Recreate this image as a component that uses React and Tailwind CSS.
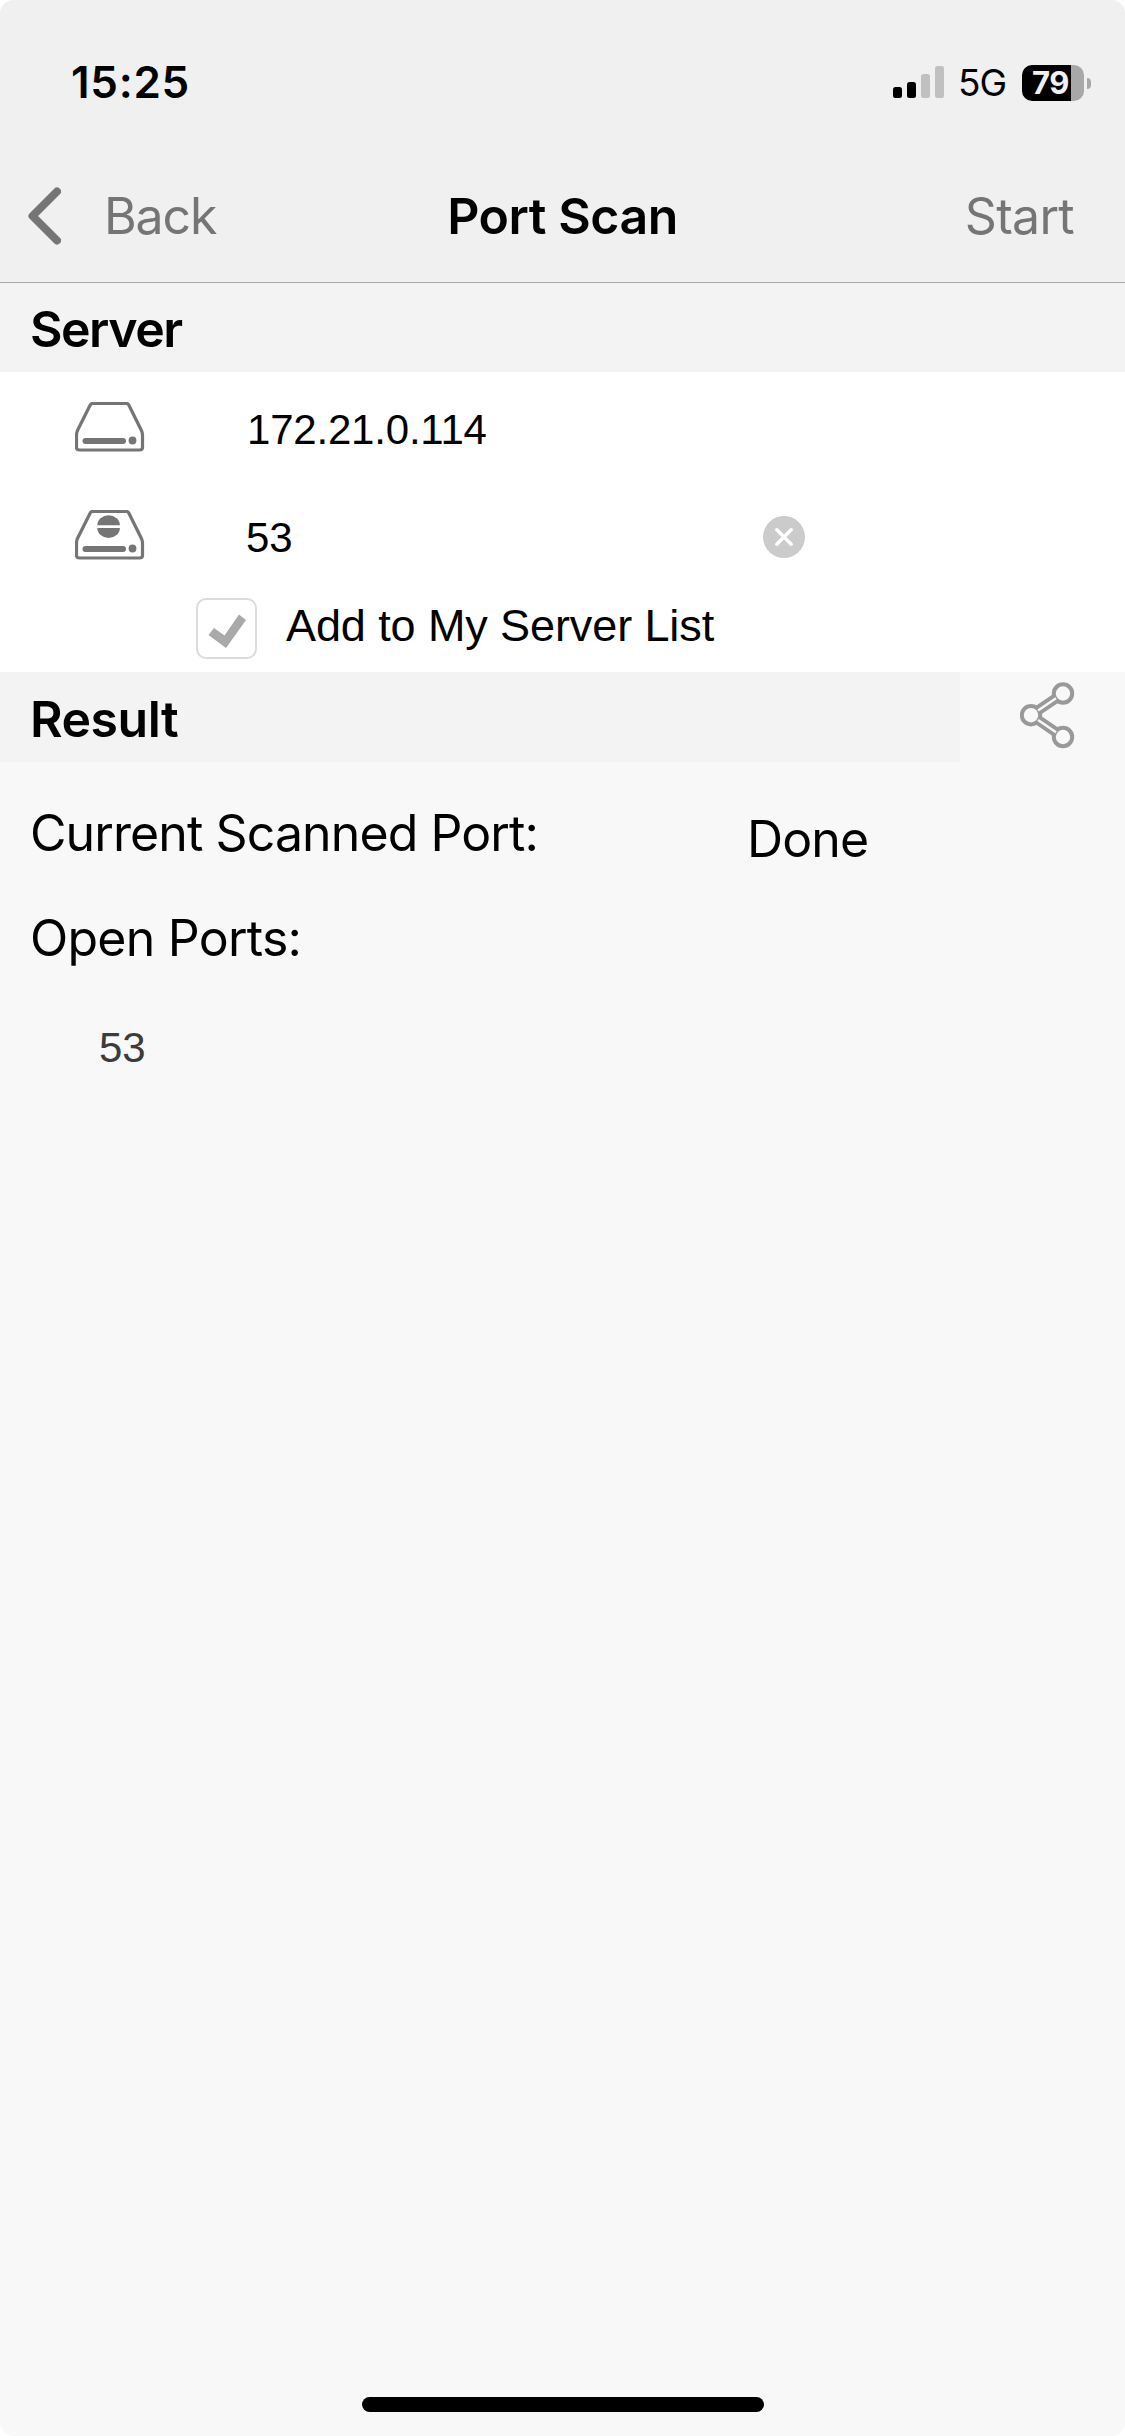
function Drive({ withDisc }) {
  return (
    <svg className="block" width="70" height="50" viewBox="0 0 70 50" fill="none">
      <path d="M17.500 1.500H51.500Q53 1.500 53.800 3L66.200 28Q67.500 30.500 67.500 33V45.500Q67.500 48 64.500 48H4.500Q1.500 48 1.500 45.500V33Q1.500 30.500 2.700 28L15.200 3Q16 1.500 17.500 1.500Z" stroke="#757575" strokeWidth="3.200" />
      <rect x="7.500" y="36" width="43.500" height="6" rx="3" fill="#757575" />
      <circle cx="57.500" cy="38.500" r="3.900" fill="#757575" />
      {withDisc && (
        <>
          <path d="M22.300 15.200A11.300 10 0 0 1 44.900 15.200Z" fill="#757575" />
          <path d="M22.300 18A11.300 10 0 0 0 44.900 18Z" fill="#757575" />
        </>
      )}
    </svg>
  );
}

export default function App() {
  return (
    <div className="w-[1125px] h-[2436px] bg-white overflow-hidden">
      <div className="w-full h-full bg-[#f8f8f8] rounded-[14px] overflow-hidden flex flex-col text-black font-['Inter','Liberation_Sans',sans-serif] whitespace-nowrap">
        <header className="h-[283px] shrink-0 bg-[#f0f0f0] border-b border-[#a9a9a9]">
          <div className="h-[150px] pt-[56px] pl-[71px] pr-[34px] flex justify-between items-start">
            <div className="text-[44px] leading-[52px] font-semibold tracking-[0.7px]">15:25</div>
            <div className="flex">
              <div className="mt-[10px] h-8 flex items-end gap-[5px]">
                <i className="w-[9px] h-[11px] rounded-[2.5px] bg-black" />
                <i className="w-[9px] h-4 rounded-[2.5px] bg-black" />
                <i className="w-[9px] h-6 rounded-[2.5px] bg-[#c0c0c0]" />
                <i className="w-[9px] h-8 rounded-[2.5px] bg-[#c0c0c0]" />
              </div>
              <div className="ml-[14px] mt-[8px] w-[64px] text-[37px] leading-[38px] tracking-[-1px]">5G</div>
              <div className="mt-[8px] flex items-center">
                <div className="w-[62px] h-9 rounded-[10px] overflow-hidden bg-[linear-gradient(to_right,#000_49px,#a8a8a8_49px)] pl-[10px] text-[#f0f0f0] font-bold text-[31px] leading-[36px] tracking-[-0.5px]">79</div>
                <i className="ml-[3px] w-[4px] h-[11px] rounded-r-full bg-[#a8a8a8]" />
              </div>
            </div>
          </div>
          <div className="h-[132px] px-7 grid grid-cols-[1fr_auto_1fr] items-start pt-[36px] text-[50px] leading-[60px]">
            <div className="flex text-[#757575]">
              <svg className="block -ml-px mt-px" width="34" height="58" viewBox="0 0 34 58" fill="none" stroke="#757575" strokeWidth="8" strokeLinecap="round" strokeLinejoin="round"><path d="M30 4.500L5.500 29L30 53.500" /></svg>
              <span className="ml-[43px] tracking-[-1.1px]">Back</span>
            </div>
            <h1 className="font-semibold tracking-[-0.45px]">Port Scan</h1>
            <div className="text-right pr-[23px] tracking-[-0.7px] text-[#757575]">Start</div>
          </div>
        </header>

        <h2 className="h-[89px] shrink-0 bg-[#f3f3f3] pl-[30px] pt-[16px] text-[50px] leading-[60px] font-semibold tracking-[-1.5px]">Server</h2>

        <section className="h-[300px] shrink-0 bg-white font-['Liberation_Sans',Arial,sans-serif]">
          <div className="h-[108px] pl-[75px] pt-[30px] flex">
            <Drive />
            <span className="ml-[102px] mt-[4px] text-[42px] leading-[48px] tracking-[-0.2px]">172.21.0.114</span>
          </div>
          <div className="h-[108px] pl-[75px] pt-[30px] flex">
            <Drive withDisc />
            <span className="ml-[101px] mt-[4px] w-[517px] text-[42px] leading-[48px]">53</span>
            <svg className="block mt-[6px]" width="42" height="42" viewBox="0 0 42 42"><circle cx="21" cy="21" r="21" fill="#cbcbcb" /><path d="M13.800 13.800L28.200 28.200M28.200 13.800L13.800 28.200" stroke="#fff" strokeWidth="3.500" strokeLinecap="round" /></svg>
          </div>
          <div className="pl-[196px] pt-[10px] flex">
            <div className="w-[61px] h-[61px] rounded-[10px] border-2 border-[#dcdce0]">
              <svg className="block" width="57" height="57" viewBox="0 0 57 57"><path d="M10.500 35L16 28L26.500 35.500L41 14.500L48 20L28 48Z" fill="#a9a9a9" /></svg>
            </div>
            <span className="ml-[29px] mt-[2px] text-[45px] leading-[52px] tracking-[-0.1px]">Add to My Server List</span>
          </div>
        </section>

        <div className="h-[90px] shrink-0 flex">
          <h2 className="w-[960px] bg-[#f3f3f3] pl-[30px] pt-[17px] text-[50px] leading-[60px] font-semibold tracking-[-0.5px]">Result</h2>
          <svg className="block ml-[60px] mt-[10px]" width="55" height="67" viewBox="0 0 55 67" fill="none">
            <path d="M11 33.200L43 11.500M11 33.200L43 55" stroke="#999999" strokeWidth="10" />
            <g stroke="#999999" strokeWidth="4" fill="#f8f8f8"><circle cx="11" cy="33.200" r="9.200" /><circle cx="43" cy="11.500" r="9.200" /><circle cx="43" cy="55" r="9.200" /></g>
            <path d="M18 28.500L36 16.300M18 37.900L36 50.200" stroke="#f8f8f8" strokeWidth="2.400" />
          </svg>
        </div>

        <section className="text-[50px] leading-[60px]">
          <div className="flex pl-[30px] pt-[41px] h-[146px]">
            <span className="w-[717px] tracking-[-0.9px]">Current Scanned Port:</span>
            <span className="mt-[6px] tracking-[-0.9px]">Done</span>
          </div>
          <div className="pl-[30px] h-[116px] tracking-[-0.75px]">Open Ports:</div>
          <div className="pl-[99px] text-[42px] leading-[48px] text-[#3c3c3c] font-['Liberation_Sans',Arial,sans-serif]">53</div>
        </section>

        <div className="mt-auto mb-[24px] mx-auto w-[402px] h-[15px] rounded-full bg-black" />
      </div>
    </div>
  );
}
